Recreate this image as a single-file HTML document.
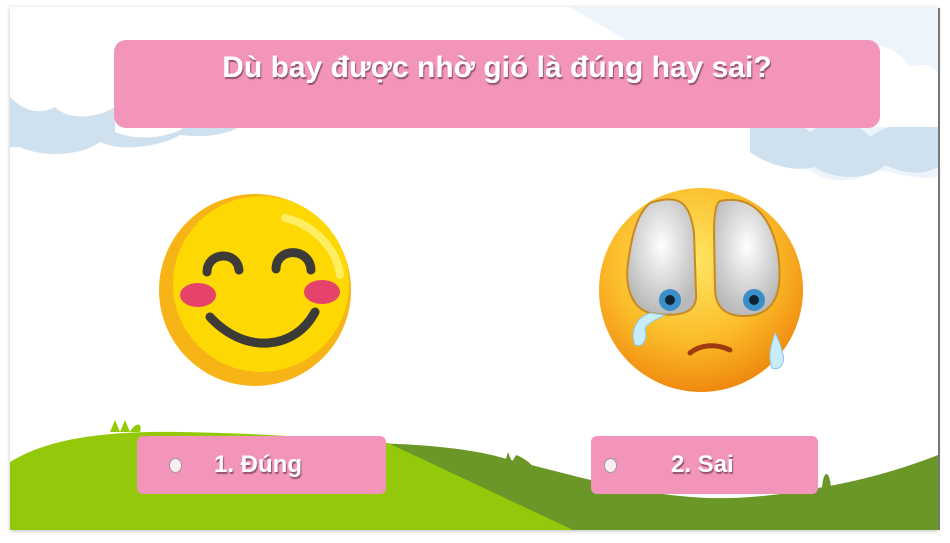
<!DOCTYPE html>
<html><head><meta charset="utf-8"><style>
body{margin:0;width:950px;height:543px;background:#fff;overflow:hidden;font-family:"Liberation Sans",sans-serif}
.slide{position:absolute;left:10px;top:7px;width:928px;height:523px;background:#fff;box-shadow:0 1px 4px rgba(0,0,0,.25);overflow:hidden}
.edge{position:absolute;left:938px;top:8px;width:2px;height:522px;background:#777}
.box{position:absolute;background:#f395bb;border-radius:12px;color:#fff;font-weight:bold;text-shadow:1px 2px 1px rgba(80,40,60,.6)}
.dot{position:absolute;width:11px;height:13px;border-radius:50%;background:#fbeef3;border:1px solid #999;top:22px}
</style></head><body>
<div class="slide">
<svg width="928" height="523" style="position:absolute;left:0;top:0">
 <path d="M560 0 H928 V170 C900 175 880 160 860 165 C840 180 800 175 790 150 C770 150 750 130 755 115 L560 0Z" fill="#eef4fb"/>
 <path d="M0 90 C10 100 25 110 45 100 C60 115 90 110 105 100 L105 125 C130 135 160 130 175 120 L230 120 C210 130 190 130 170 128 C150 140 110 145 90 135 C70 150 30 150 10 140 L0 140Z" fill="#cfe1ee"/>
 <path d="M740 120 C760 110 790 115 800 125 C820 110 850 115 860 130 C880 115 910 110 928 120 V160 C910 170 890 165 875 158 C860 175 820 172 805 160 C790 165 760 160 740 145Z" fill="#cfe1ee"/>
 <path d="M820 60 C840 30 880 30 900 60 C915 55 928 60 928 70 V120 L820 120Z" fill="#fff"/>
 <path d="M340 436 C420 436 470 444 493 451 C530 460 560 468 581 473 C640 488 690 492 720 491 C760 490 790 484 808 481 C850 474 890 463 928 448 V523 H340Z" fill="#6b9628"/>
 <path d="M0 455 C40 430 100 424 170 425 C250 426 330 432 378 436 L563 523 H0Z" fill="#93c90a"/>
 <path d="M100 425 L105 413 L110 425 L115 413 L120 425 C125 415 133 415 130 425Z" fill="#93c90a"/>
 <path d="M495 455 L498 445 L502 455 L506 448 C512 450 520 455 525 462 L495 462Z" fill="#6b9628"/>
 <path d="M812 482 C813 462 820 462 821 482Z" fill="#6b9628"/>
</svg>
<!-- happy emoji -->
<svg width="200" height="200" style="position:absolute;left:145px;top:183px" viewBox="0 0 200 200">
 <circle cx="100" cy="100" r="96" fill="#f7b416"/>
 <circle cx="106" cy="94" r="88" fill="#fdd802"/>
 <path d="M130 28 C160 35 182 60 185 85" stroke="#fff27a" stroke-width="8" fill="none" stroke-linecap="round" opacity=".8"/>
 <path d="M52 82 C52 62 82 60 84 80" stroke="#3d3b38" stroke-width="9" fill="none" stroke-linecap="round"/>
 <path d="M121 79 C121 57 155 57 156 80" stroke="#3d3b38" stroke-width="9" fill="none" stroke-linecap="round"/>
 <ellipse cx="43" cy="105" rx="18" ry="12" fill="#e5436a"/>
 <ellipse cx="167" cy="102" rx="18" ry="12" fill="#e5436a"/>
 <path d="M55 127 C90 165 140 160 160 122" stroke="#3d3b38" stroke-width="9" fill="none" stroke-linecap="round"/>
</svg>
<!-- sad emoji -->
<svg width="220" height="220" style="position:absolute;left:580px;top:166px" viewBox="0 0 220 220">
 <defs><radialGradient id="g" cx="45%" cy="35%" r="65%"><stop offset="0" stop-color="#ffe766"/><stop offset=".6" stop-color="#fbbd2a"/><stop offset="1" stop-color="#f08a10"/></radialGradient>
 <radialGradient id="e" cx="50%" cy="40%" r="60%"><stop offset="0" stop-color="#fff"/><stop offset="1" stop-color="#b9b9b9"/></radialGradient></defs>
 <circle cx="111" cy="117" r="102" fill="url(#g)"/>
 <path d="M60 30 C90 20 100 30 104 60 L106 120 C108 140 90 145 60 140 C40 135 35 110 38 90 C42 60 48 40 60 30Z" fill="url(#e)" stroke="#c88a20" stroke-width="2"/>
 <path d="M130 28 C160 22 180 40 188 80 C192 110 190 135 165 142 C140 146 125 138 125 115 L124 60 C124 40 126 30 130 28Z" fill="url(#e)" stroke="#c88a20" stroke-width="2"/>
 <circle cx="80" cy="127" r="11" fill="#3a8fc8"/><circle cx="80" cy="127" r="5" fill="#123"/>
 <circle cx="164" cy="127" r="11" fill="#3a8fc8"/><circle cx="164" cy="127" r="5" fill="#123"/>
 <path d="M60 140 C45 145 40 160 45 172 C52 175 58 168 55 155 C60 148 70 145 75 142Z" fill="#c9ecfb" stroke="#8cc8e6"/>
 <path d="M185 160 C180 175 178 185 182 195 C192 198 196 188 192 178 C190 170 188 165 185 160Z" fill="#c9ecfb" stroke="#8cc8e6"/>
 <path d="M100 180 C110 172 125 170 140 177" stroke="#a03a10" stroke-width="5" fill="none" stroke-linecap="round"/>
</svg>
<div class="box" style="left:104px;top:33px;width:766px;height:88px;font-size:30px;text-align:center;line-height:56px">Dù bay được nhờ gió là đúng hay sai?</div>
<div class="box" style="left:127px;top:429px;width:249px;height:58px;font-size:24px;border-radius:6px"><div class="dot" style="left:32px"></div><span style="position:absolute;left:77px;top:15px">1. Đúng</span></div>
<div class="box" style="left:581px;top:429px;width:227px;height:58px;font-size:24px;border-radius:6px"><div class="dot" style="left:13px"></div><span style="position:absolute;left:80px;top:15px">2. Sai</span></div>
</div>
<div class="edge"></div>
</body></html>
